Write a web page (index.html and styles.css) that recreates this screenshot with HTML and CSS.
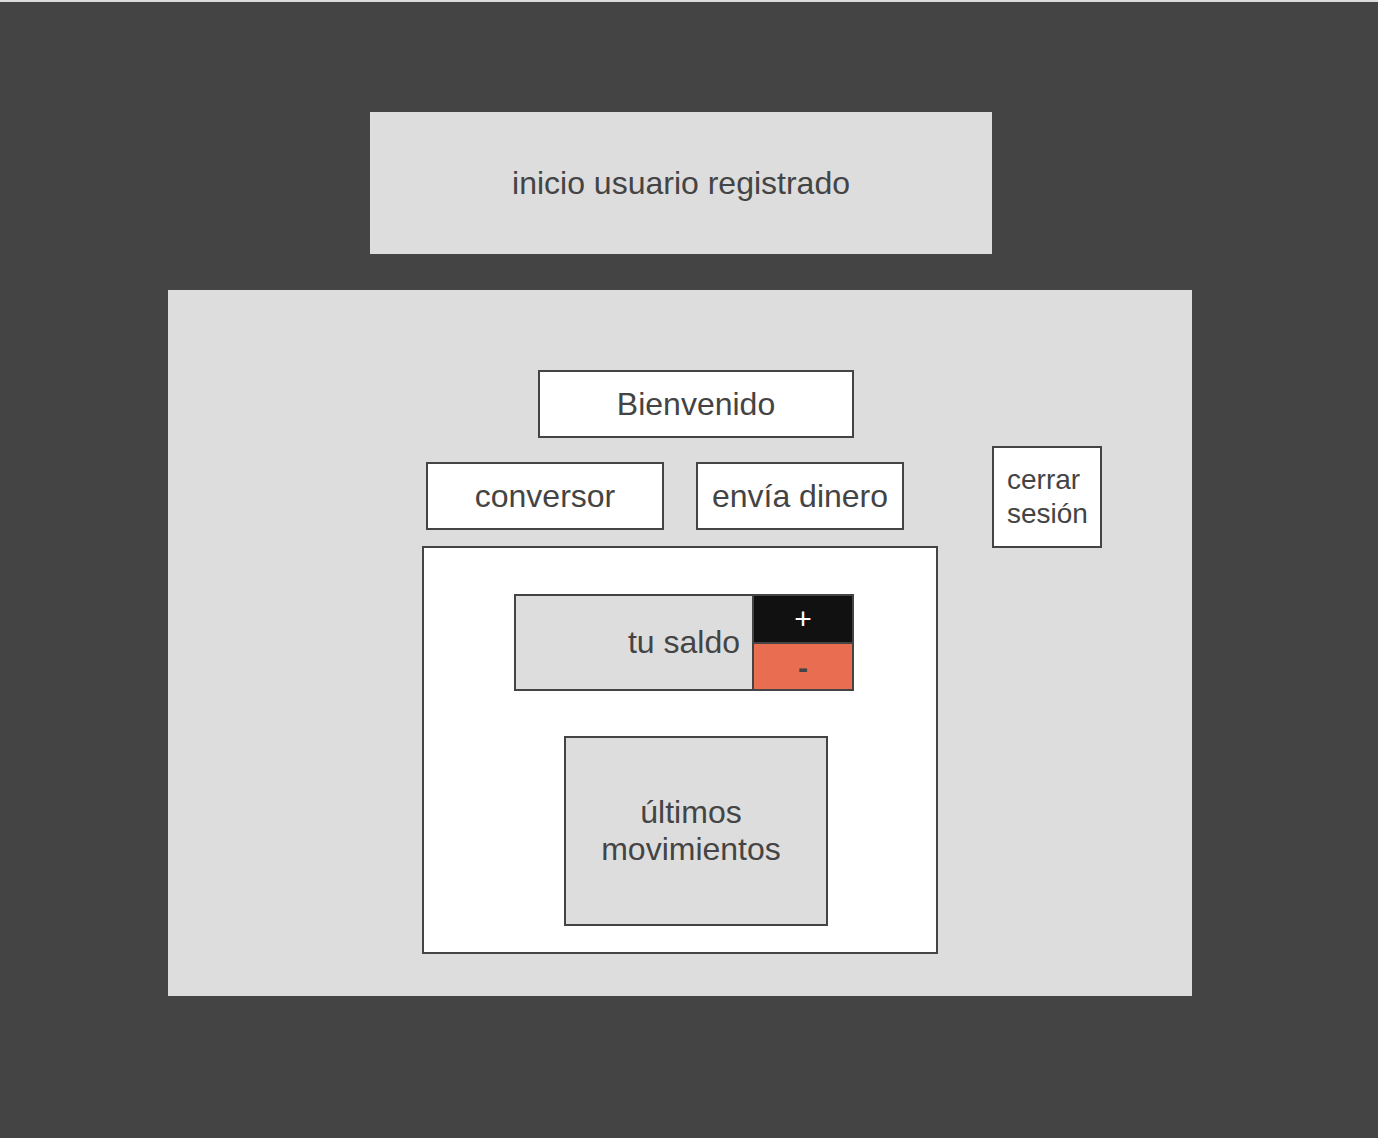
FILE: index.html
```html
<!DOCTYPE html>
<html lang="es">
<head>
  <meta charset="UTF-8">
  <title>Inicio - usuario registrado</title>
  <meta name="viewport" content="width=device-width, initial-scale=1.0">
  <link rel="stylesheet" href="styles.css">
</head>
<body>
  <div class="page">
    <header class="top-banner">inicio usuario registrado</header>
    <main class="panel">
      <div class="main-col">
        <div class="box welcome">Bienvenido</div>
        <nav class="actions">
          <a href="#" class="box action-btn btn-conversor">conversor</a>
          <a href="#" class="box action-btn btn-send">envía dinero</a>
        </nav>
        <section class="account">
          <div class="balance">
            <div class="balance-label">tu saldo</div>
            <div class="balance-ops">
              <button class="op op-plus">+</button>
              <button class="op op-minus">-</button>
            </div>
          </div>
          <div class="movements">últimos<br>movimientos</div>
        </section>
      </div>
      <div class="side-col">
        <a href="#" class="box logout">cerrar sesión</a>
      </div>
    </main>
  </div>
</body>
</html>
```

FILE: styles.css
```css
* {
  margin: 0;
  padding: 0;
  box-sizing: border-box;
  font-family: 'Liberation Sans', Arial, sans-serif;
}
body {
  background: #444;
  border-top: 2px solid #ddd;
  min-height: 100vh;
  color: #444;
}
.page {
  padding: 110px 0 142px 168px;
}
.top-banner {
  width: 622px;
  height: 142px;
  margin-left: 202px;
  background: #ddd;
  display: flex;
  align-items: center;
  justify-content: center;
  font-size: 32px;
}
.panel {
  width: 1024px;
  height: 706px;
  margin-top: 36px;
  background: #ddd;
  display: flex;
  padding: 80px 0 0 254px;
}
.box {
  background: #fff;
  border: 2px solid #444;
  display: flex;
  align-items: center;
  justify-content: center;
  color: #444;
  text-decoration: none;
}
.welcome {
  width: 316px;
  height: 68px;
  margin-left: 116px;
  font-size: 32px;
}
.actions {
  display: flex;
  gap: 32px;
  margin: 24px 0 16px 4px;
}
.action-btn {
  height: 68px;
  font-size: 32px;
}
.btn-conversor {
  width: 238px;
}
.btn-send {
  width: 208px;
}
.account {
  width: 516px;
  height: 408px;
  background: #fff;
  border: 2px solid #444;
  padding: 46px 0 0 90px;
}
.balance {
  width: 340px;
  height: 97px;
  border: 2px solid #444;
  display: flex;
}
.balance-label {
  width: 238px;
  background: #ddd;
  border-right: 2px solid #444;
  display: flex;
  align-items: center;
  justify-content: flex-end;
  padding-right: 12px;
  font-size: 32px;
}
.balance-ops {
  flex: 1;
  display: flex;
  flex-direction: column;
}
.op {
  border: none;
  font-size: 30px;
  font-family: 'Liberation Sans', Arial, sans-serif;
  line-height: 1;
  cursor: pointer;
}
.op-plus {
  height: 48px;
  background: #111;
  color: #fff;
  border-bottom: 2px solid #444;
}
.op-minus {
  flex: 1;
  background: #e96d50;
  color: #444;
  font-weight: bold;
  padding-top: 2px;
}
.movements {
  width: 264px;
  height: 190px;
  margin: 45px 0 0 50px;
  background: #ddd;
  border: 2px solid #444;
  display: flex;
  align-items: center;
  justify-content: center;
  text-align: center;
  font-size: 32px;
  line-height: 37px;
  padding-right: 10px;
}
.side-col {
  padding: 76px 0 0 54px;
}
.logout {
  width: 110px;
  height: 102px;
  justify-content: flex-start;
  padding: 0 12px 0 13px;
  font-size: 28px;
  line-height: 34px;
}
```
